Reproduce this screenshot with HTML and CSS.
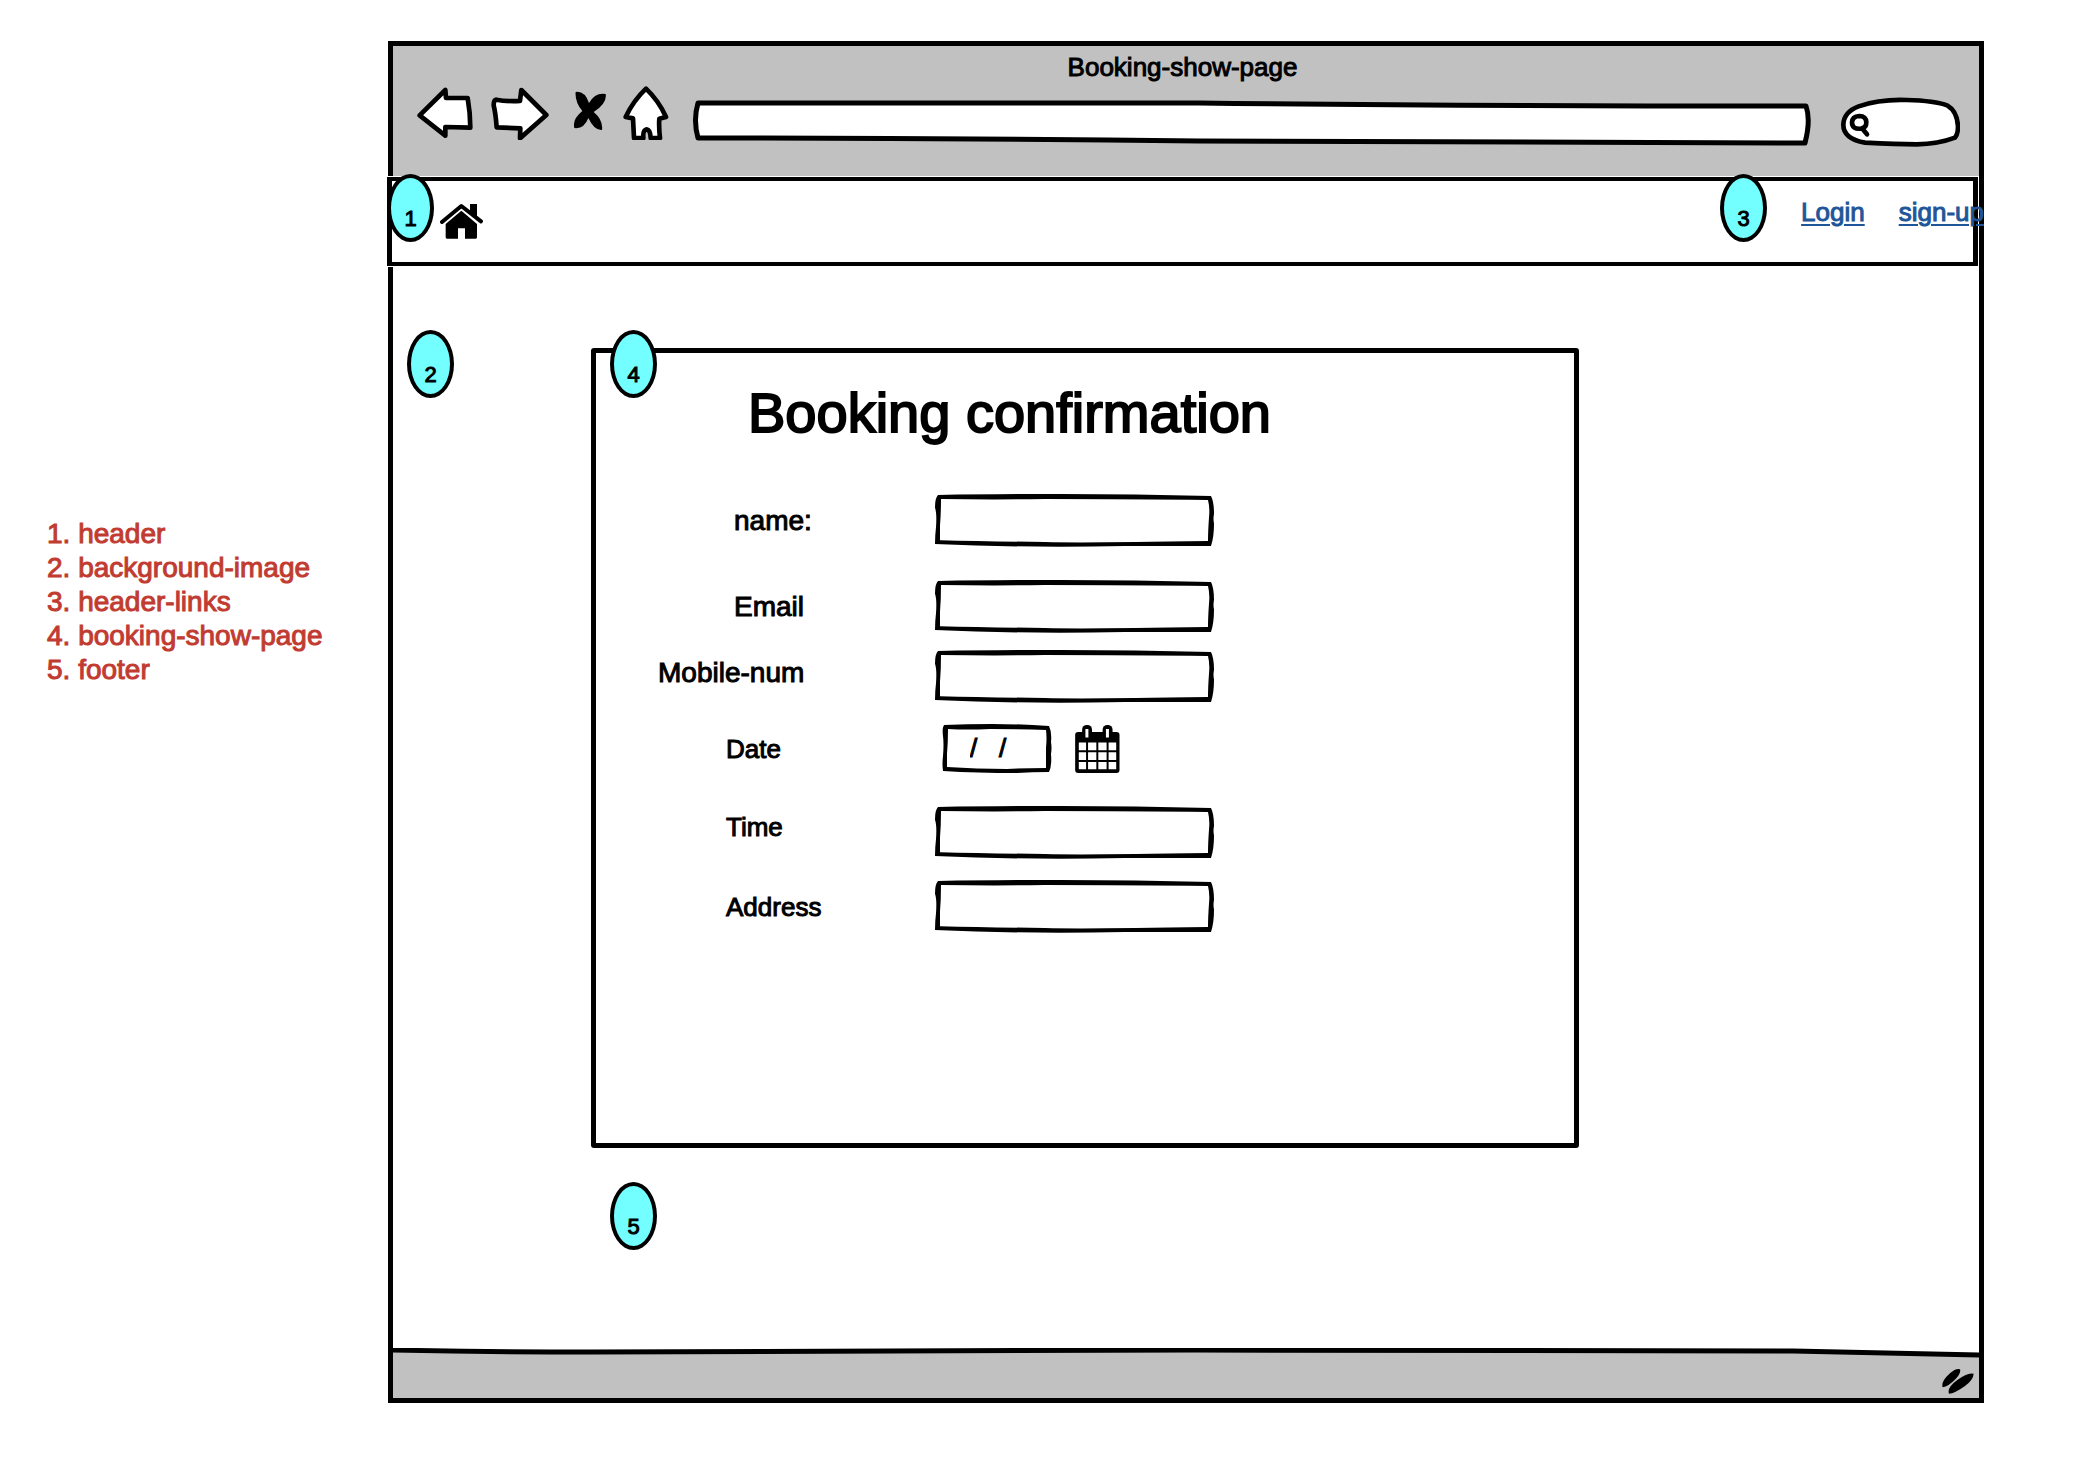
FILE: index.html
```html
<!DOCTYPE html>
<html lang="en">
<head>
<meta charset="utf-8">
<meta name="viewport" content="width=device-width, initial-scale=1">
<title>Booking-show-page</title>
<link rel="stylesheet" href="styles.css">
</head>
<body>
<!-- Hand-drawn outlines shared by the text boxes -->
<svg class="defs" width="0" height="0" aria-hidden="true">
  <symbol id="sketch-box" viewBox="0 0 279 54" preserveAspectRatio="none">
    <path fill-rule="evenodd" d="M3 1Q60 0 125 0Q200 0 276 2Q279 8 279 20Q278 26 279 30Q279 44 276 53Q240 53 190 53Q90 55 0 51Q0 42 1 34Q2 20 0 14Q0 4 3 1ZM6 5Q60 6 110 5Q200 5 273 6Q275 14 274 24Q273 38 273 48Q150 50 110 49Q50 48 5 47Q5 40 5 32Q6 20 6 5Z"/>
  </symbol>
  <symbol id="sketch-box-small" viewBox="0 0 110 49" preserveAspectRatio="none">
    <path fill-rule="evenodd" d="M2 1Q25 0 50 0Q80 0 107 2Q110 8 109 18Q110 24 109 30Q110 42 107 48Q90 48 75 49Q35 49 1 47Q0 40 1 32Q2 20 1 12Q0 4 2 1ZM6 5Q25 6 48 5Q80 5 104 6Q105 14 104 24Q104 34 104 44Q80 44 65 45Q35 45 5 43Q5 38 5 30Q6 18 6 5Z"/>
  </symbol>
</svg>

<div class="page">
  <aside class="legend">
    <ul class="legend-list">
      <li>1. header</li>
      <li>2. background-image</li>
      <li>3. header-links</li>
      <li>4. booking-show-page</li>
      <li>5. footer</li>
    </ul>
  </aside>

  <div class="window">
    <div class="chrome">
      <p class="chrome-title">Booking-show-page</p>
      <div class="toolbar">
        <button class="tool" type="button" aria-label="Back">
          <svg width="56" height="54" viewBox="111 168 168 162"><path class="outline" d="M119 256L196 180L198 204L263 204Q271 250 271 293L196 291L196 317Z"/></svg>
        </button>
        <button class="tool" type="button" aria-label="Forward">
          <svg width="60" height="54" viewBox="327 168 180 162"><path class="outline" d="M349 209Q380 215 420 213L424 180L499 255L420 325L421 295L350 292Q347 250 341 226Q341 210 349 209Z"/></svg>
        </button>
        <button class="tool" type="button" aria-label="Stop">
          <svg width="42" height="54" viewBox="555 168 126 162"><path d="M587 186Q614 182 627 219Q646 186 677 192Q682 220 641 246Q670 270 666 300Q643 302 625 264Q612 298 583 294Q576 268 607 243Q584 215 587 186Z"/></svg>
        </button>
        <button class="tool" type="button" aria-label="Home">
          <svg width="46" height="54" viewBox="729 168 138 162"><path class="outline" d="M798 176Q836 212 858 261L838 266Q836 290 840 324L812 324Q811 299 800 298Q788 300 790 324L762 324L759 265L737 261Q760 212 798 176Z"/></svg>
        </button>
        <div class="address">
          <svg class="frame" viewBox="0 0 1118 48" preserveAspectRatio="none" aria-hidden="true"><path class="outline-bar" d="M5 5Q250 5 506 5Q760 8 1113 8Q1118 22 1112 45Q800 45 506 43Q250 40 5 40Q0 22 5 5Z"/></svg>
          <input class="bare-input" type="text" aria-label="Address bar">
        </div>
        <div class="search">
          <svg class="frame" viewBox="423 200 357 150" aria-hidden="true">
            <path class="outline" d="M476 228Q540 206 620 209Q705 211 743 226Q771 242 774 288Q774 312 765 322Q715 341 650 342Q590 342 495 337Q430 325 430 283Q431 245 476 228Z"/>
            <path class="lens" d="M478 257Q498 257 499 276Q499 293 484 295Q456 298 456 276Q457 258 478 257ZM486 294L501 312"/>
          </svg>
          <input class="bare-input" type="search" aria-label="Search">
        </div>
      </div>
    </div>

    <header class="site-header">
      <span class="badge badge-header">1</span>
      <a class="home-link" href="#" aria-label="Home">
        <svg width="43" height="36" viewBox="180 520 129 108"><path class="roof" d="M186 577L244 529L303 575"/><path d="M270 523H291V567L270 548ZM197 583L244 543L291 583V623Q291 627 287 627H255V596H234V627H201Q197 627 197 623Z"/></svg>
      </a>
      <span class="badge badge-links">3</span>
      <nav class="header-links">
        <a href="#">Login</a>
        <a href="#">sign-up</a>
      </nav>
    </header>

    <main class="content">
      <span class="badge badge-background">2</span>
      <section class="card">
        <span class="badge badge-card">4</span>
        <h1>Booking confirmation</h1>
        <form class="form">
          <div class="row row-name">
            <label class="label label-large" for="name">name:</label>
            <span class="field"><svg class="frame" aria-hidden="true"><use href="#sketch-box"/></svg><input class="bare-input" id="name" type="text"></span>
          </div>
          <div class="row row-email">
            <label class="label label-large" for="email">Email</label>
            <span class="field"><svg class="frame" aria-hidden="true"><use href="#sketch-box"/></svg><input class="bare-input" id="email" type="email"></span>
          </div>
          <div class="row row-mobile">
            <label class="label label-large label-outdent" for="mobile">Mobile-num</label>
            <span class="field"><svg class="frame" aria-hidden="true"><use href="#sketch-box"/></svg><input class="bare-input" id="mobile" type="tel"></span>
          </div>
          <div class="row row-date">
            <label class="label" for="date">Date</label>
            <span class="field field-date"><svg class="frame" aria-hidden="true"><use href="#sketch-box-small"/></svg><input class="bare-input" id="date" type="text" value="/   /"></span>
            <button class="tool calendar" type="button" aria-label="Choose a date">
              <svg width="45" height="48" viewBox="0 0 135 145">
                <rect y="21" width="134" height="124" rx="9"/>
                <rect x="21" width="30" height="45" rx="14"/><rect x="83" width="30" height="45" rx="14"/>
                <path class="paper" d="M31 12h9v26h-9zM93 12h9v26h-9zM11 53h22v23H11zM39 53h25v23H39zM70 53h25v23H70zM101 53h23v23h-23zM11 82h22v24H11zM39 82h25v24H39zM70 82h25v24H70zM101 82h23v24h-23zM11 112h22v22H11zM39 112h25v22H39zM70 112h25v22H70zM101 112h23v22h-23z"/>
              </svg>
            </button>
          </div>
          <div class="row row-time">
            <label class="label label-raised" for="time">Time</label>
            <span class="field"><svg class="frame" aria-hidden="true"><use href="#sketch-box"/></svg><input class="bare-input" id="time" type="text"></span>
          </div>
          <div class="row row-address">
            <label class="label" for="address">Address</label>
            <span class="field"><svg class="frame" aria-hidden="true"><use href="#sketch-box"/></svg><input class="bare-input" id="address" type="text"></span>
          </div>
        </form>
      </section>
      <footer class="site-footer"><span class="badge badge-footer">5</span></footer>
    </main>

    <div class="status">
      <svg class="frame" viewBox="0 0 1586 50" preserveAspectRatio="none" aria-hidden="true"><path class="status-fill" d="M-4 2Q100 4 200 4Q500 3 800 2Q1100 2 1400 3L1590 7V60H-4Z"/></svg>
      <svg class="grip" width="32" height="26" viewBox="188 113 96 78" aria-hidden="true"><path d="M190 171Q184 154 212 129Q230 113 242 117Q246 127 228 147Q207 169 190 171ZM209 190Q202 172 234 149Q265 125 283 130Q282 148 257 167Q225 190 209 190Z"/></svg>
    </div>
  </div>
</div>
</body>
</html>
```
FILE: styles.css
```css
* {
  box-sizing: border-box;
}

body {
  margin: 0;
  background: #fff;
  color: #000;
  font-family: "Liberation Sans", Arial, sans-serif;
  font-size: 26px;
  line-height: 30px;
  -webkit-text-stroke: 1px currentColor;
}

h1,
p,
ul {
  margin: 0;
  padding: 0;
}

.defs {
  position: absolute;
}

.page {
  display: grid;
  grid-template-columns: 341px 1fr;
  padding: 41px 100px 55px 47px;
}

/* Legend */

.legend {
  padding-top: 476px;
  color: #c23b31;
  font-size: 28px;
  line-height: 34px;
}

.legend-list {
  list-style: none;
  white-space: nowrap;
}

/* Browser window */

.window {
  border: 5px solid #000;
}

.chrome {
  padding: 6px 19px 29px 24px;
  background: #c1c1c1;
}

.chrome-title {
  padding-right: 12px;
  text-align: center;
}

.toolbar {
  display: flex;
  align-items: flex-start;
  gap: 16px;
  margin-top: 4px;
}

.tool {
  display: block;
  margin: 0;
  border: 0;
  padding: 0;
  background: none;
}

svg {
  display: block;
}

.outline,
.outline-bar {
  fill: #fff;
  stroke: #000;
  stroke-width: 14;
  stroke-linejoin: round;
}

.outline-bar {
  stroke-width: 5;
}

.lens {
  fill: none;
  stroke: #000;
  stroke-width: 14;
  stroke-linecap: round;
}

/* The drawn frame and its input share one grid cell */

.address,
.search,
.field {
  display: grid;
}

.frame,
.bare-input {
  grid-area: 1 / 1;
  width: 100%;
  height: 100%;
  min-width: 0;
}

.bare-input {
  margin: 0;
  border: 0;
  padding: 0 12px;
  background: transparent;
  color: inherit;
  font: inherit;
}

.address {
  flex: 1;
  height: 48px;
  margin: 12px 14px 0 8px;
}

.search {
  width: 119px;
  height: 50px;
  margin-top: 11px;
}

.search .bare-input {
  padding-left: 32px;
}

/* Site header */

.site-header {
  position: relative;
  display: flex;
  justify-content: space-between;
  align-items: flex-start;
  height: 89px;
  margin: 1px 1px 2px -6px;
  border: 4px solid #000;
  border-left-width: 5px;
  border-right-width: 5px;
  padding: 22px 0 0 48px;
  background: #fff;
  box-shadow: 0 0 0 1px #fff;
}

.home-link {
  display: block;
  color: #000;
}

.roof {
  fill: none;
  stroke: #000;
  stroke-width: 12;
  stroke-linecap: round;
  stroke-linejoin: round;
}

.header-links {
  position: relative;
  display: flex;
  gap: 34px;
  margin-right: -11px;
  margin-top: -6px;
}

.header-links a {
  color: #1f5699;
  text-decoration-thickness: 2px;
  text-underline-offset: 3px;
}

/* Numbered annotation markers */

.badge {
  position: absolute;
  z-index: 1;
  width: 47px;
  height: 68px;
  border: 4px solid #000;
  border-radius: 50%;
  padding-top: 26px;
  background: #73ffff;
  font-size: 22px;
  line-height: 30px;
  text-align: center;
}

.badge-header {
  top: -7px;
  left: -5px;
}

.badge-links {
  top: -7px;
  right: 206px;
}

.badge-background {
  top: 62px;
  left: 14px;
}

.badge-card {
  top: -23px;
  left: 14px;
}

.site-footer .badge {
  position: static;
  display: block;
}

/* Page content */

.content {
  position: relative;
  display: grid;
  grid-template-columns: 198fr 988fr 400fr;
  padding: 80px 0 98px;
}

.card,
.site-footer {
  grid-column: 2;
}

.card {
  position: relative;
  min-height: 800px;
  border: 5px solid #000;
  border-radius: 3px;
  padding: 28px 24px 24px 0;
}

.site-footer {
  padding: 34px 0 0 19px;
}

h1 {
  padding-left: 152px;
  font-size: 56px;
  font-weight: 400;
  line-height: 64px;
  -webkit-text-stroke-width: 2px;
}

.form {
  padding-top: 49px;
}

.row {
  display: flex;
  align-items: center;
}

.row-email,
.row-time {
  margin-top: 33px;
}

.row-mobile {
  margin-top: 17px;
}

.row-date,
.row-address {
  margin-top: 21px;
}

.label {
  width: 339px;
  padding-left: 130px;
}

.label-large {
  padding-left: 138px;
  font-size: 28px;
}

.label-outdent {
  padding: 0 0 8px 62px;
}

.label-raised {
  padding-bottom: 12px;
}

.field {
  width: 279px;
  height: 53px;
}

.field-date {
  width: 110px;
  height: 49px;
  margin-left: 7px;
}

.field-date .bare-input {
  padding: 0 0 0 28px;
}

.calendar {
  margin-left: 23px;
}

.paper {
  fill: #fff;
}

/* Status bar */

.status {
  display: grid;
  align-items: end;
  height: 50px;
}

.status-fill {
  fill: #c1c1c1;
  stroke: #000;
  stroke-width: 5;
}

.status .frame {
  overflow: hidden;
}

.grip {
  grid-area: 1 / 1;
  justify-self: end;
  margin: 0 5px 4px 0;
}
```
